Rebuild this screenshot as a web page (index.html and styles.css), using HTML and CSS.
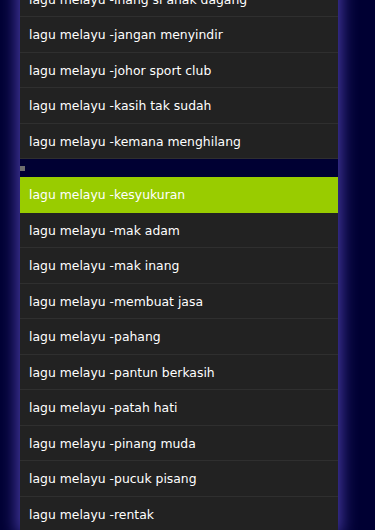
FILE: index.html
```html
<!DOCTYPE html>
<html>
<head>
	<meta charset="utf-8">
	<title>lagu melayu</title>
	<link rel="stylesheet" href="styles.css">
</head>
<body>
	<div id="songs">
		<ul class="songList">
			<li class="song">lagu melayu -inang si anak dagang</li>
			<li class="song">lagu melayu -jangan menyindir</li>
			<li class="song">lagu melayu -johor sport club</li>
			<li class="song">lagu melayu -kasih tak sudah</li>
			<li class="song">lagu melayu -kemana menghilang</li>
			<li class="divider"><span class="dot"></span></li>
			<li class="song active">lagu melayu -kesyukuran</li>
			<li class="song">lagu melayu -mak adam</li>
			<li class="song">lagu melayu -mak inang</li>
			<li class="song">lagu melayu -membuat jasa</li>
			<li class="song">lagu melayu -pahang</li>
			<li class="song">lagu melayu -pantun berkasih</li>
			<li class="song">lagu melayu -patah hati</li>
			<li class="song">lagu melayu -pinang muda</li>
			<li class="song">lagu melayu -pucuk pisang</li>
			<li class="song">lagu melayu -rentak</li>
		</ul>
	</div>
</body>
</html>
```

FILE: styles.css
```css
body{
	margin: 0;
	height: 530px;
	overflow: hidden;
	font: 12.4px/1 "DejaVu Sans", Verdana, sans-serif;
	color: #fff;
	background-color: #000033;
}
#songs{
	width: 318px;
	margin: -18.5px 0 0 20px;
	box-shadow: 0 0 16px 3px #4b3eaa;
}
.songList{
	list-style: none;
	margin: 0;
	padding: 0;
	background-color: #000033;
}
.song{
	display: flex;
	align-items: center;
	box-sizing: border-box;
	height: 35.5px;
	padding: 2px 0 0 9px;
	background-color: #222222;
	border-bottom: 1px solid #2f2f2f;
}
.song.active{
	background-color: #99cc00;
	border-bottom-color: #99cc00;
}
.divider{
	display: flex;
	align-items: center;
	height: 18px;
}
.dot{
	width: 5px;
	height: 5px;
	background-color: #6e6e6e;
}
```
